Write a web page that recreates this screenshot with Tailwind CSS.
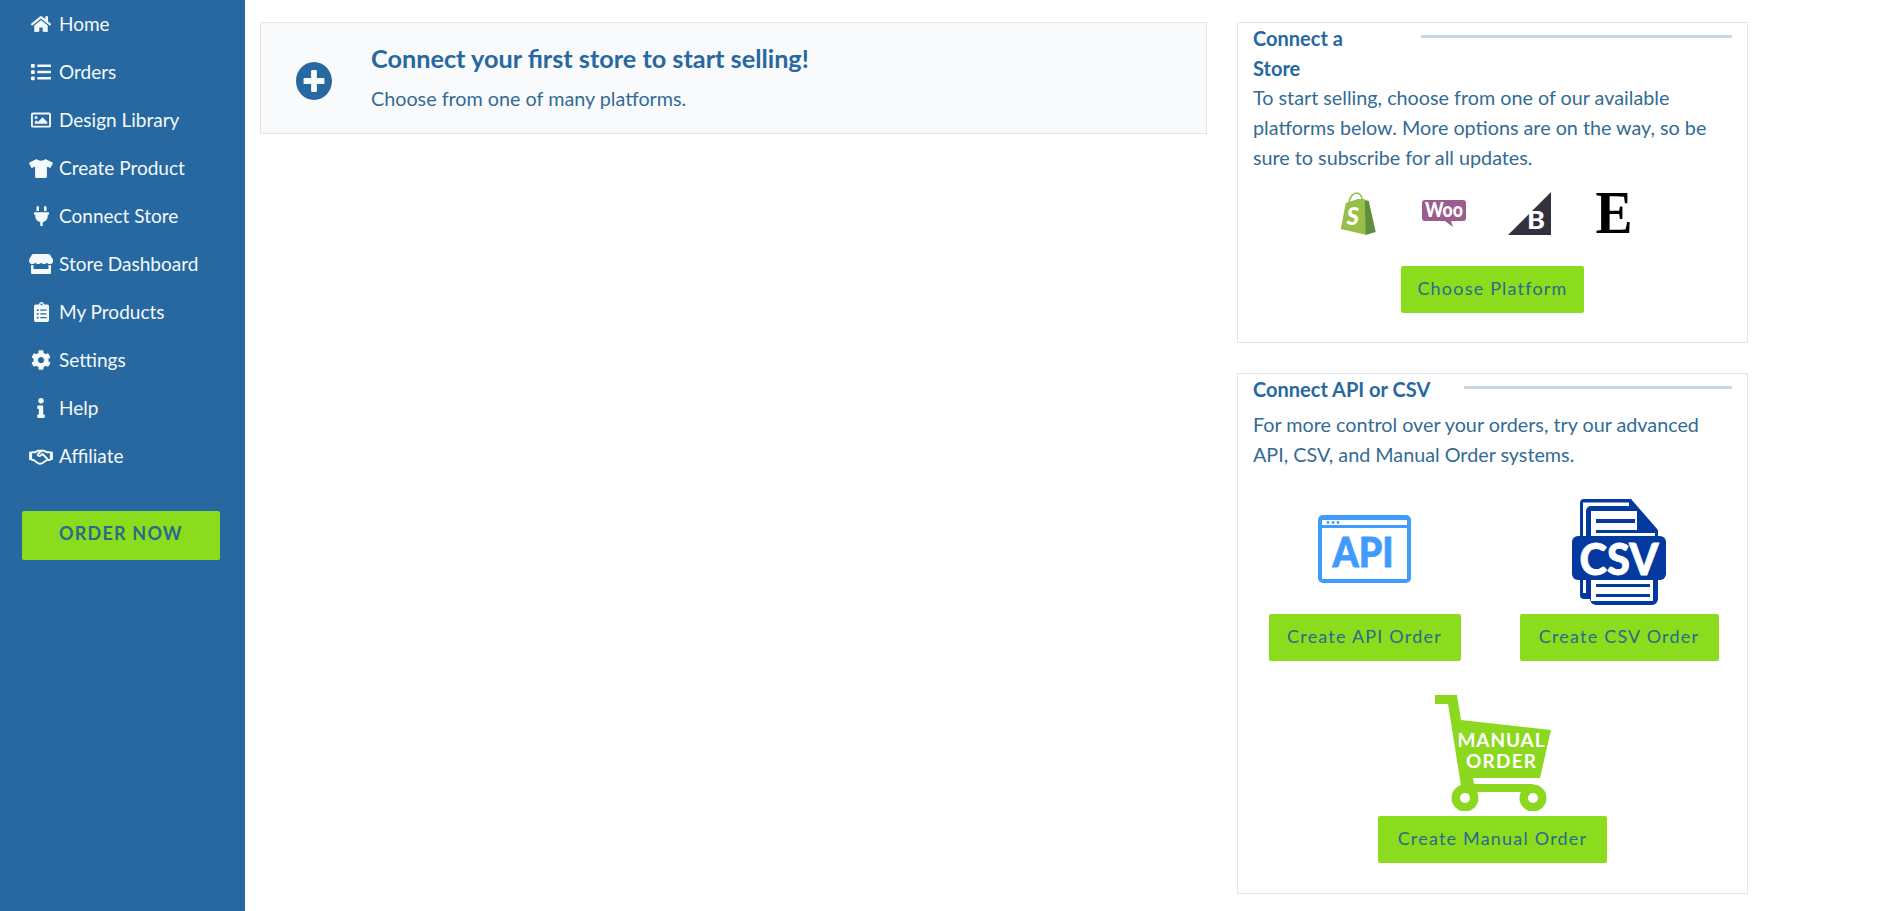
<!DOCTYPE html>
<html lang="en">
<head>
<meta charset="utf-8">
<title>Connect Store</title>
<script src="https://cdn.jsdelivr.net/npm/@tailwindcss/browser@4"></script>
</head>
<body class="bg-white font-['Lato','Liberation_Sans',sans-serif] overflow-hidden">
<div class="flex h-[911px] w-[1901px]">
  <aside class="w-[245px] shrink-0 bg-[#26689f] text-[#f4f9fc]">
    <nav class="flex flex-col text-[19px]">
      <a class="flex h-[48px] items-center pl-[29px]"><span class="flex w-[24px] justify-center"><svg class="w-[22px] h-[18px] fill-current" viewBox="0 0 576 512"><path d="M280.37 148.26L96 300.11V464a16 16 0 0 0 16 16l112.06-.29a16 16 0 0 0 15.92-16V368a16 16 0 0 1 16-16h64a16 16 0 0 1 16 16v95.64a16 16 0 0 0 16 16.05L464 480a16 16 0 0 0 16-16V300L295.67 148.26a12.19 12.19 0 0 0-15.3 0zM571.6 251.47L488 182.56V44.05a12 12 0 0 0-12-12h-56a12 12 0 0 0-12 12v72.61L318.47 43a48 48 0 0 0-61 0L4.34 251.47a12 12 0 0 0-1.6 16.9l25.5 31A12 12 0 0 0 45.15 301l235.22-193.74a12.19 12.19 0 0 1 15.3 0L530.9 301a12 12 0 0 0 16.9-1.6l25.5-31a12 12 0 0 0-1.7-16.93z"/></svg></span><span class="ml-[6px]">Home</span></a>
      <a class="flex h-[48px] items-center pl-[29px]"><span class="flex w-[24px] justify-center"><svg class="w-[20px] h-[20px] fill-current" viewBox="0 0 512 512"><path d="M80 368H16a16 16 0 0 0-16 16v64a16 16 0 0 0 16 16h64a16 16 0 0 0 16-16v-64a16 16 0 0 0-16-16zm0-320H16A16 16 0 0 0 0 64v64a16 16 0 0 0 16 16h64a16 16 0 0 0 16-16V64a16 16 0 0 0-16-16zm0 160H16a16 16 0 0 0-16 16v64a16 16 0 0 0 16 16h64a16 16 0 0 0 16-16v-64a16 16 0 0 0-16-16zm416 176H176a16 16 0 0 0-16 16v32a16 16 0 0 0 16 16h320a16 16 0 0 0 16-16v-32a16 16 0 0 0-16-16zm0-320H176a16 16 0 0 0-16 16v32a16 16 0 0 0 16 16h320a16 16 0 0 0 16-16V80a16 16 0 0 0-16-16zm0 160H176a16 16 0 0 0-16 16v32a16 16 0 0 0 16 16h320a16 16 0 0 0 16-16v-32a16 16 0 0 0-16-16z"/></svg></span><span class="ml-[6px]">Orders</span></a>
      <a class="flex h-[48px] items-center pl-[29px]"><span class="flex w-[24px] justify-center"><svg class="w-[20px] h-[20px] fill-current" viewBox="0 0 512 512"><path fill-rule="evenodd" d="M48 64h416a48 48 0 0 1 48 48v288a48 48 0 0 1-48 48H48a48 48 0 0 1-48-48V112a48 48 0 0 1 48-48zM54 112a6 6 0 0 0-6 6v276a6 6 0 0 0 6 6h404a6 6 0 0 0 6-6V118a6 6 0 0 0-6-6zM128 152a40 40 0 1 1 0 80 40 40 0 0 1 0-80zM96 352v-48l40-40 40 40 120-120 120 120v48z"/></svg></span><span class="ml-[6px]">Design Library</span></a>
      <a class="flex h-[48px] items-center pl-[29px]"><span class="flex w-[24px] justify-center"><svg class="w-[24px] h-[19px] fill-current" viewBox="0 0 640 512"><path d="M631.2 96.5L436.5 0C416.4 27.8 371.9 47.2 320 47.2S223.6 27.8 203.5 0L8.8 96.5c-7.9 4-11.1 13.6-7.2 21.5l57.2 114.5c4 7.9 13.6 11.1 21.5 7.2l56.6-27.7c10.6-5.2 23 2.5 23 14.4V480c0 17.7 14.3 32 32 32h256c17.7 0 32-14.3 32-32V226.3c0-11.8 12.4-19.6 23-14.4l56.6 27.7c7.9 4 17.5.8 21.5-7.2L638.3 118c4-7.9.8-17.6-7.1-21.5z"/></svg></span><span class="ml-[6px]">Create Product</span></a>
      <a class="flex h-[48px] items-center pl-[29px]"><span class="flex w-[24px] justify-center"><svg class="w-[15px] h-[20px] fill-current" viewBox="0 0 384 512"><path d="M320,32a32,32,0,0,0-64,0v96h64Zm48,128H16A16,16,0,0,0,0,176v32a16,16,0,0,0,16,16H32v32A160.07,160.07,0,0,0,160,412.8V512h64V412.8A160.07,160.07,0,0,0,352,256V224h16a16,16,0,0,0,16-16V176A16,16,0,0,0,368,160ZM128,32a32,32,0,0,0-64,0v96h64Z"/></svg></span><span class="ml-[6px]">Connect Store</span></a>
      <a class="flex h-[48px] items-center pl-[29px]"><span class="flex w-[24px] justify-center"><svg class="w-[24px] h-[20px] fill-current" viewBox="0 0 616 512"><path d="M602 118.6L537.1 15C531.3 5.7 521 0 510 0H106C95 0 84.7 5.7 78.9 15L14 118.6c-33.9 54.1-3.9 129.3 59.4 137.9 4.6.6 9.2.9 13.8.9 29.9 0 56.4-13.1 74.6-33.4 18.2 20.2 44.8 33.4 74.6 33.4 29.9 0 56.4-13.1 74.6-33.4 18.2 20.2 44.8 33.4 74.6 33.4 29.9 0 56.4-13.1 74.6-33.4 18.3 20.2 44.8 33.4 74.6 33.4 4.7 0 9.2-.3 13.8-.9 63.5-8.5 93.6-83.7 59.6-137.9zM529.5 288c-10 0-19.9-1.5-29.5-3.8V384H116v-99.8c-9.6 2.2-19.5 3.8-29.5 3.8-6 0-12.1-.4-18-1.2-5.6-.8-11.1-2.1-16.4-3.6V480c0 17.7 14.3 32 32 32h448c17.7 0 32-14.3 32-32V283.2c-5.4 1.6-10.8 2.9-16.4 3.6-6.1.8-12.1 1.2-18.2 1.2z"/></svg></span><span class="ml-[6px]">Store Dashboard</span></a>
      <a class="flex h-[48px] items-center pl-[29px]"><span class="flex w-[24px] justify-center"><svg class="w-[15px] h-[20px] fill-current" viewBox="0 0 384 512"><path d="M336 64h-80c0-35.3-28.7-64-64-64s-64 28.7-64 64H48C21.5 64 0 85.5 0 112v352c0 26.5 21.5 48 48 48h288c26.5 0 48-21.5 48-48V112c0-26.5-21.5-48-48-48zM96 424c-13.3 0-24-10.7-24-24s10.7-24 24-24 24 10.7 24 24-10.7 24-24 24zm0-96c-13.3 0-24-10.7-24-24s10.7-24 24-24 24 10.7 24 24-10.7 24-24 24zm0-96c-13.3 0-24-10.7-24-24s10.7-24 24-24 24 10.7 24 24-10.7 24-24 24zm96-192c13.3 0 24 10.7 24 24s-10.7 24-24 24-24-10.7-24-24 10.7-24 24-24zm128 368c0 4.4-3.6 8-8 8H168c-4.4 0-8-3.6-8-8v-16c0-4.4 3.6-8 8-8h144c4.4 0 8 3.6 8 8v16zm0-96c0 4.4-3.6 8-8 8H168c-4.4 0-8-3.6-8-8v-16c0-4.4 3.6-8 8-8h144c4.4 0 8 3.6 8 8v16zm0-96c0 4.4-3.6 8-8 8H168c-4.4 0-8-3.6-8-8v-16c0-4.4 3.6-8 8-8h144c4.4 0 8 3.6 8 8v16z"/></svg></span><span class="ml-[6px]">My Products</span></a>
      <a class="flex h-[48px] items-center pl-[29px]"><span class="flex w-[24px] justify-center"><svg class="w-[20px] h-[20px] fill-current" viewBox="0 0 512 512"><path d="M487.4 315.7l-42.6-24.6c4.3-23.2 4.3-47 0-70.2l42.6-24.6c4.9-2.8 7.1-8.6 5.5-14-11.1-35.6-30-67.8-54.7-94.6-3.8-4.1-10-5.1-14.8-2.3L380.8 110c-17.9-15.4-38.5-27.3-60.8-35.1V25.8c0-5.6-3.9-10.5-9.4-11.7-36.7-8.2-74.3-7.8-109.2 0-5.5 1.2-9.4 6.1-9.4 11.7V75c-22.2 7.9-42.8 19.8-60.8 35.1L88.7 85.5c-4.9-2.8-11-1.9-14.8 2.3-24.7 26.7-43.6 58.9-54.7 94.6-1.7 5.4.6 11.2 5.5 14L67.3 221c-4.3 23.2-4.3 47 0 70.2l-42.6 24.6c-4.9 2.8-7.1 8.6-5.5 14 11.1 35.6 30 67.8 54.7 94.6 3.8 4.1 10 5.1 14.8 2.3l42.6-24.6c17.9 15.4 38.5 27.3 60.8 35.1v49.2c0 5.6 3.9 10.5 9.4 11.7 36.7 8.2 74.3 7.8 109.2 0 5.5-1.2 9.4-6.1 9.4-11.7v-49.2c22.2-7.9 42.8-19.8 60.8-35.1l42.6 24.6c4.9 2.8 11 1.9 14.8-2.3 24.7-26.7 43.6-58.9 54.7-94.6 1.5-5.5-.7-11.3-5.6-14.1zM256 336c-44.1 0-80-35.9-80-80s35.9-80 80-80 80 35.9 80 80-35.9 80-80 80z"/></svg></span><span class="ml-[6px]">Settings</span></a>
      <a class="flex h-[48px] items-center pl-[29px]"><span class="flex w-[24px] justify-center"><svg class="w-[8px] h-[20px] fill-current" viewBox="0 0 192 512"><path d="M20 424.229h20V279.771H20c-11.046 0-20-8.954-20-20V212c0-11.046 8.954-20 20-20h112c11.046 0 20 8.954 20 20v212.229h20c11.046 0 20 8.954 20 20V492c0 11.046-8.954 20-20 20H20c-11.046 0-20-8.954-20-20v-47.771c0-11.046 8.954-20 20-20zM96 0C56.235 0 24 32.235 24 72s32.235 72 72 72 72-32.235 72-72S135.764 0 96 0z"/></svg></span><span class="ml-[6px]">Help</span></a>
      <a class="flex h-[48px] items-center pl-[29px]"><span class="flex w-[24px] justify-center"><svg class="w-[24px] h-[19px]" viewBox="0 0 640 512" fill="none" stroke="currentColor" stroke-width="52" stroke-linejoin="round" stroke-linecap="round"><path d="M80 140h90l70-40h160l70 40h90"/><path d="M80 350h40l110 80c40 30 90 30 130 0l120-80h80"/><path d="M330 110l-90 80c-30 40 30 70 70 40l50-40 140 140"/><path d="M0 128h80v224H0zM640 128h-80v224h80z" fill="currentColor" stroke="none"/></svg></span><span class="ml-[6px]">Affiliate</span></a>
    </nav>
    <a class="mx-[22px] mt-[31px] flex h-[49px] w-[198px] items-center justify-center rounded-[2px] bg-[#8cdc1e] pb-[4px] text-[18px] font-bold tracking-[1.2px] text-[#2a6b8c]">ORDER NOW</a>
  </aside>

  <main class="flex flex-1 items-start pt-[22px]">
    <section class="ml-[15px] flex h-[112px] w-[947px] items-center border border-[#e2e5ea] bg-[#f8fafc]">
      <svg class="mt-[6px] ml-[35px] h-[38px] w-[36px] fill-[#26689f]" viewBox="8 8 496 496" preserveAspectRatio="none"><path d="M256 8C119 8 8 119 8 256s111 248 248 248 248-111 248-248S393 8 256 8zm144 276c0 6.6-5.4 12-12 12h-92v92c0 6.6-5.4 12-12 12h-56c-6.6 0-12-5.4-12-12v-92h-92c-6.6 0-12-5.4-12-12v-56c0-6.6 5.4-12 12-12h92v-92c0-6.6 5.4-12 12-12h56c6.6 0 12 5.4 12 12v92h92c6.6 0 12 5.4 12 12v56z"/></svg>
      <div class="ml-[39px] pb-[2px]">
        <h1 class="text-[25.25px] leading-[36px] font-bold text-[#26689f]">Connect your first store to start selling!</h1>
        <p class="mt-[8px] text-[19.75px] leading-[30px] text-[#336b94]">Choose from one of many platforms.</p>
      </div>
    </section>

    <div class="ml-[30px] flex w-[511px] flex-col gap-[30px]">
      <section class="h-[321px] border border-[#e2e5ea] px-[15px]">
        <div class="flex items-start">
          <h2 class="w-[120px] text-[20px] leading-[30px] font-bold text-[#26689f]">Connect a Store</h2>
          <div class="mt-[12px] ml-[48px] h-[3px] flex-1 bg-[#cbd6e4]"></div>
        </div>
        <p class="text-[19.75px] leading-[30px] text-[#336b94]">To start selling, choose from one of our available platforms below. More options are on the way, so be sure to subscribe for all updates.</p>
        <div class="mt-[19px] ml-[86px] flex items-start">
          <svg class="h-[44px] w-[39px]" viewBox="2 0 35.5 44" role="img" aria-label="Shopify"><path d="M2 37L7 11 19 7 26 7 28 43z" fill="#95bf47"/><path d="M26 8l4 1 7 31-10 3z" fill="#5e8e3e"/><path d="M10 11C11 4 15 1 18 1s5 3 6 8" fill="none" stroke="#95bf47" stroke-width="1.6"/><text x="14" y="33" text-anchor="middle" font-family="Lato" font-weight="900" font-style="italic" font-size="24" fill="#fff">S</text></svg>
          <svg class="mt-[8px] ml-[44px] h-[27px] w-[44px] overflow-visible" viewBox="0 0 44 27" role="img" aria-label="WooCommerce"><path d="M3 0H41a3 3 0 0 1 3 3V18a3 3 0 0 1-3 3H29L31 27 23 21H3a3 3 0 0 1-3-3V3a3 3 0 0 1 3-3z" fill="#9b5c8f"/><text x="22" y="17" text-anchor="middle" textLength="38" lengthAdjust="spacingAndGlyphs" font-family="Lato" font-weight="900" font-size="20" fill="#fff">Woo</text></svg>
          <svg class="ml-[42px] h-[43px] w-[43px]" viewBox="0 0 43 43" role="img" aria-label="BigCommerce"><path d="M43 0V43H0z" fill="#34313f"/><text x="28" y="37" text-anchor="middle" textLength="18" lengthAdjust="spacingAndGlyphs" font-family="Lato" font-weight="900" font-size="24" fill="#fff">B</text></svg>
          <svg class="ml-[44px] h-[43px] w-[38px] overflow-visible" viewBox="0 0 38 43" role="img" aria-label="Etsy"><text x="19" y="41" text-anchor="middle" textLength="37" lengthAdjust="spacingAndGlyphs" font-family="Liberation Serif" font-weight="700" font-size="61" fill="#000">E</text></svg>
        </div>
        <div class="mt-[30px] flex justify-center">
          <a class="flex h-[47px] w-[183px] items-center justify-center rounded-[2px] bg-[#8cdc1e] pb-[2px] text-[18px] tracking-[1.2px] text-[#2a6b8c]">Choose Platform</a>
        </div>
      </section>

      <section class="h-[521px] border border-[#e2e5ea] px-[15px]">
        <div class="flex items-start">
          <h2 class="text-[20px] leading-[30px] font-bold whitespace-nowrap text-[#26689f]">Connect API or CSV</h2>
          <div class="mt-[12px] ml-[34px] h-[3px] flex-1 bg-[#cbd6e4]"></div>
        </div>
        <p class="mt-[6px] text-[19.75px] leading-[30px] text-[#336b94]">For more control over your orders, try our advanced API, CSV, and Manual Order systems.</p>
        <div class="mt-[29px] ml-[2px] flex items-end justify-center gap-[59px]">
          <div class="flex w-[192px] flex-col items-center">
            <svg class="h-[68px] w-[93px]" viewBox="0 0 93 68" role="img" aria-label="API"><rect width="93" height="68" rx="5" fill="#3f9bfc"/><rect x="4" y="5" width="85" height="5" fill="#fff"/><circle cx="10" cy="7.5" r="1.4" fill="#3f9bfc"/><circle cx="15" cy="7.5" r="1.4" fill="#3f9bfc"/><circle cx="20" cy="7.5" r="1.4" fill="#3f9bfc"/><rect x="4" y="13" width="85" height="51" fill="#fff"/><text x="45" y="52" text-anchor="middle" textLength="61" lengthAdjust="spacingAndGlyphs" font-family="Lato" font-weight="900" font-size="41" fill="#3f9bfc" stroke="#3f9bfc" stroke-width="0.8">API</text></svg>
            <a class="mt-[31px] flex h-[47px] w-[192px] items-center justify-center rounded-[2px] bg-[#8cdc1e] pb-[2px] text-[18px] tracking-[1.2px] text-[#2a6b8c]">Create API Order</a>
          </div>
          <div class="flex w-[199px] flex-col items-center">
            <svg class="h-[107px] w-[94px]" viewBox="0 0 94 107" role="img" aria-label="CSV"><path d="M12 0H59L86 31V100a6 6 0 0 1-6 6H24a6 6 0 0 1-6-6H12a4 4 0 0 1-4-4V4a4 4 0 0 1 4-4z" fill="#04399f"/><path d="M11 3.5H57V7H19a5 5 0 0 0-5 5V94H11z" fill="#fff"/><path d="M19 12H65V31H19zM19 34H83V37H19zM19 31H24V34H19z" fill="#fff"/><rect x="24" y="20" width="39" height="4" fill="#04399f"/><rect x="19" y="81" width="62" height="21" fill="#fff"/><rect x="24" y="85" width="54" height="3" fill="#04399f"/><rect x="24" y="95" width="54" height="3" fill="#04399f"/><rect y="37" width="94" height="44" rx="6" fill="#04399f"/><text x="47" y="76" text-anchor="middle" textLength="79" lengthAdjust="spacingAndGlyphs" font-family="Lato" font-weight="900" font-size="44" fill="#fff" stroke="#fff" stroke-width="0.8">CSV</text></svg>
            <a class="mt-[8px] flex h-[47px] w-[199px] items-center justify-center rounded-[2px] bg-[#8cdc1e] pb-[2px] text-[18px] tracking-[1.2px] text-[#2a6b8c]">Create CSV Order</a>
          </div>
        </div>
        <div class="mt-[34px] flex flex-col items-center">
          <svg class="h-[116px] w-[116px]" viewBox="0 0 116 116" role="img" aria-label="Manual order"><path d="M0 0H22L26 25 116 35 105 83H38L39 89H98V97H27L13 9H0Z" fill="#8cd81f"/><circle cx="30" cy="103" r="13.5" fill="#8cd81f"/><circle cx="98" cy="103" r="13.5" fill="#8cd81f"/><circle cx="30" cy="103" r="5" fill="#fff"/><circle cx="98" cy="103" r="5" fill="#fff"/><text x="66" y="52" text-anchor="middle" textLength="87" lengthAdjust="spacing" font-family="Lato" font-weight="700" font-size="19" fill="#fff">MANUAL</text><text x="66" y="73" text-anchor="middle" textLength="70" lengthAdjust="spacing" font-family="Lato" font-weight="700" font-size="19" fill="#fff">ORDER</text></svg>
          <a class="mt-[5px] flex h-[47px] w-[229px] items-center justify-center rounded-[2px] bg-[#8cdc1e] pb-[2px] text-[18px] tracking-[1.2px] text-[#2a6b8c]">Create Manual Order</a>
        </div>
      </section>
    </div>
  </main>
</div>
</body>
</html>
